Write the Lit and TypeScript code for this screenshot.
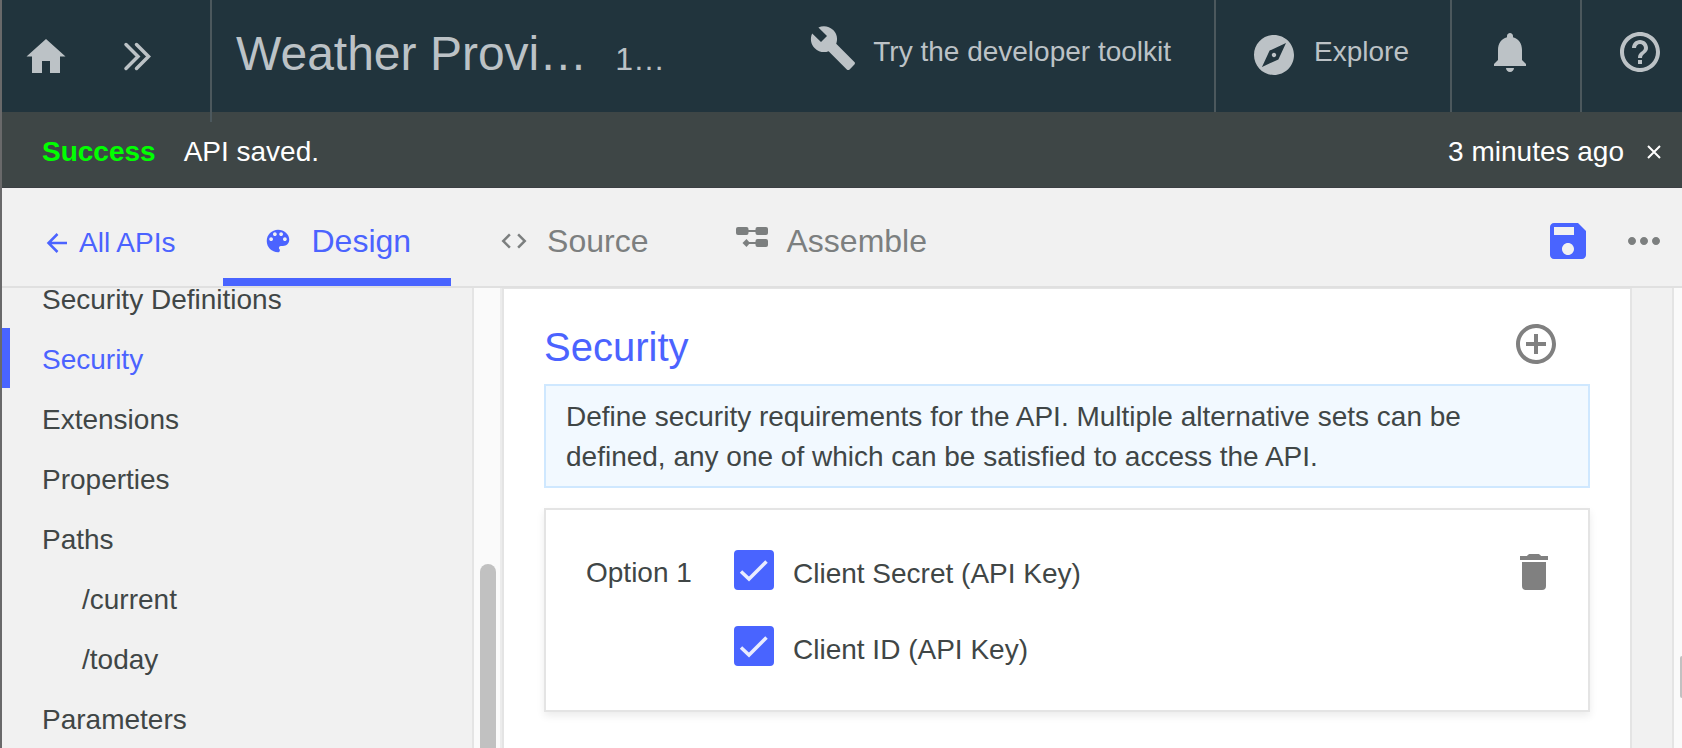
import { LitElement, html, css, svg } from "lit";
import { customElement, state } from "lit/decorators.js";
import { classMap } from "lit/directives/class-map.js";

const paths = {
  home: "M2.500 20.500 22 3l19.500 17.500H36V37H26V25H18V37H8V20.500z",
  build:
    "M22.700 19l-9.100-9.100c.9-2.300.4-5-1.500-6.900-2-2-5-2.400-7.400-1.300L9 6 6 9 1.600 4.700C.4 7.100.9 10.100 2.900 12.100c1.900 1.900 4.600 2.400 6.900 1.500l9.100 9.100c.4.4 1 .4 1.400 0l2.300-2.300c.5-.4.5-1.100.1-1.400z",
  explore:
    "M12 10.900c-.61 0-1.100.49-1.100 1.100s.49 1.100 1.100 1.100c.61 0 1.100-.49 1.100-1.100s-.49-1.100-1.100-1.100zM12 2C6.480 2 2 6.480 2 12s4.480 10 10 10 10-4.480 10-10S17.520 2 12 2zm2.190 12.190L6 18l3.810-8.190L18 6l-3.810 8.190z",
  bell: "M12 22c1.100 0 2-.9 2-2h-4c0 1.100.89 2 2 2zm6-6v-5c0-3.070-1.640-5.640-4.500-6.320V4c0-.83-.67-1.500-1.500-1.500s-1.500.67-1.500 1.500v.68C7.630 5.360 6 7.920 6 11v5l-2 2v1h16v-1l-2-2z",
  help: "M11 18h2v-2h-2v2zm1-16C6.480 2 2 6.480 2 12s4.480 10 10 10 10-4.480 10-10S17.520 2 12 2zm0 18c-4.410 0-8-3.590-8-8s3.590-8 8-8 8 3.590 8 8-3.590 8-8 8zm0-14c-2.210 0-4 1.790-4 4h2c0-1.100.9-2 2-2s2 .9 2 2c0 2-3 1.750-3 5h2c0-2.250 3-2.500 3-5 0-2.210-1.790-4-4-4z",
  palette:
    "M12 3c-4.970 0-9 4.030-9 9s4.030 9 9 9c.83 0 1.500-.67 1.500-1.500 0-.39-.15-.74-.39-1.010-.23-.26-.38-.61-.38-.99 0-.83.67-1.500 1.500-1.500H16c2.760 0 5-2.240 5-5 0-4.420-4.030-8-9-8zm-5.500 9c-.83 0-1.500-.67-1.500-1.500S5.670 9 6.500 9 8 9.670 8 10.500 7.330 12 6.500 12zm3-4C8.670 8 8 7.330 8 6.500S8.670 5 9.500 5s1.500.67 1.500 1.500S10.330 8 9.500 8zm5 0c-.83 0-1.500-.67-1.500-1.500S13.670 5 14.500 5s1.500.67 1.500 1.500S15.330 8 14.500 8zm3 4c-.83 0-1.500-.67-1.500-1.500S16.670 9 17.500 9s1.500.67 1.500 1.500-.67 1.500-1.500 1.500z",
  code: "M9.400 16.600L4.800 12l4.600-4.600L8 6l-6 6 6 6 1.400-1.400zm5.200 0l4.600-4.600-4.600-4.600L16 6l6 6-6 6-1.400-1.400z",
  save: "M17 3H5c-1.110 0-2 .9-2 2v14c0 1.100.89 2 2 2h14c1.100 0 2-.9 2-2V7l-4-4zM12 19c-1.660 0-3-1.340-3-3s1.340-3 3-3 3 1.340 3 3-1.340 3-3 3zm3-10H5V5h10v4z",
  more: "M6 10c-1.100 0-2 .9-2 2s.9 2 2 2 2-.9 2-2-.9-2-2-2zm12 0c-1.100 0-2 .9-2 2s.9 2 2 2 2-.9 2-2-.9-2-2-2zm-6 0c-1.100 0-2 .9-2 2s.9 2 2 2 2-.9 2-2-.9-2-2-2z",
  add: "M13 7h-2v4H7v2h4v4h2v-4h4v-2h-4V7zm-1-5C6.480 2 2 6.480 2 12s4.480 10 10 10 10-4.480 10-10S17.520 2 12 2zm0 18c-4.410 0-8-3.590-8-8s3.590-8 8-8 8 3.590 8 8-3.590 8-8 8z",
};

const icon = (name: keyof typeof paths, size = 48, box = "0 0 24 24") => html`
  <svg width=${size} height=${size} viewBox=${box} fill="currentColor" aria-hidden="true">
    ${svg`<path d=${paths[name]} />`}
  </svg>
`;

@customElement("app-root")
export class AppRoot extends LitElement {
  static styles = css`
    :host {
      display: flex;
      flex-direction: column;
      box-sizing: border-box;
      height: 100vh;
      overflow: hidden;
      border-left: 2px solid #69696a;
      background: #f1f1f1;
      color: #404646;
      font: 28px/40px "Liberation Sans", Arial, sans-serif;
    }
    *, *::before { box-sizing: border-box; }
    svg { display: block; flex: none; }
    a { color: inherit; text-decoration: none; }
    button {
      display: flex;
      align-items: center;
      margin: 0;
      padding: 0;
      border: 0;
      background: none;
      color: inherit;
      font: inherit;
      cursor: pointer;
    }
    h1, h2, p { margin: 0; font-weight: normal; }

    .header {
      position: relative;
      z-index: 1;
      display: flex;
      flex: none;
      height: 112px;
      background: #21343d;
      color: #bcc2c6;
    }
    .shortcuts {
      display: flex;
      align-items: center;
      gap: 54px;
      flex: none;
      height: 122px;
      padding: 0 56px 10px 22px;
      border-right: 2px solid #4c585d;
    }
    .title {
      display: flex;
      align-items: baseline;
      gap: 28px;
      padding-left: 24px;
      white-space: nowrap;
    }
    .title h1 { font-size: 48px; line-height: 108px; }
    .title span { font-size: 32px; }
    .tools { display: flex; margin-left: auto; }
    .tool {
      gap: 16px;
      height: 112px;
      padding: 0 42px 8px 34px;
      border-left: 2px solid #4c585d;
      white-space: nowrap;
    }
    .tool.toolkit { padding-right: 43px; border-left: 0; }
    .tool.toolkit svg { margin-bottom: 8px; }
    .tool.explore { padding-right: 41px; }
    .tool.explore svg { margin-top: 6px; }
    .tool.alerts { padding-right: 46px; }
    .tool.help { padding-right: 18px; }

    .notice {
      display: flex;
      align-items: center;
      flex: none;
      height: 76px;
      padding: 4px 18px 0 40px;
      border-bottom: 1px solid #3b3f43;
      background: #3e4646;
      color: #fff;
    }
    .notice strong { margin-right: 28px; color: #0f0; }
    .notice time { margin-left: auto; }
    .notice button { margin-left: 20px; }

    .toolbar {
      display: flex;
      align-items: stretch;
      flex: none;
      height: 100px;
      padding: 0 14px 0 40px;
      border-bottom: 2px solid #e0e0e0;
    }
    .back {
      display: flex;
      align-items: center;
      gap: 7px;
      margin-right: 48px;
      padding-top: 12px;
      color: #4b63ff;
      white-space: nowrap;
    }
    .tabs { display: flex; gap: 8px; }
    .tab {
      gap: 18px;
      padding: 16px 40px 0;
      border-bottom: 8px solid transparent;
      color: #7c7f7f;
      font-size: 32px;
    }
    .tab.active { border-color: #4964ff; color: #4b63ff; }
    .tab .flow { margin-bottom: 8px; }
    .actions {
      display: flex;
      gap: 28px;
      margin-left: auto;
      padding-top: 8px;
      color: #7c7f7f;
    }
    .actions .save { color: #4964ff; }

    .body { display: flex; flex: 1; min-height: 0; }
    .sidebar { width: 472px; flex: none; overflow: hidden; border-right: 2px solid #e4e4e4; }
    .sidebar nav { margin-top: -20px; }
    .item {
      display: block;
      height: 60px;
      padding-left: 32px;
      border-left: 8px solid transparent;
      line-height: 64px;
    }
    .item.child { padding-left: 72px; }
    .item.active { border-color: #4964ff; color: #4b63ff; }
    .track {
      width: 28px;
      flex: none;
      padding: 276px 4px 0 6px;
      border-right: 2px solid #ececec;
      background: #fafafa;
    }
    .thumb { width: 16px; height: 100%; border-radius: 8px 8px 0 0; background: #c1c1c1; }

    .panel {
      flex: 1;
      min-width: 0;
      padding: 31px 40px 0;
      border: solid #e4e4e4;
      border-width: 1px 2px 0;
      background: #fff;
    }
    .heading { display: flex; justify-content: space-between; padding-right: 30px; }
    .heading h2 { color: #4b63ff; font-size: 40px; line-height: 54px; }
    .heading button { align-self: flex-start; color: #808080; }
    .info {
      margin-top: 10px;
      padding: 11px 20px 9px;
      border: 2px solid #cfe8ff;
      background: #f2f9ff;
    }
    .card {
      display: flex;
      align-items: flex-start;
      margin-top: 20px;
      padding: 40px 30px 40px 40px;
      border: 2px solid #e4e4e4;
      box-shadow: 0 4px 8px rgba(0, 0, 0, 0.08);
    }
    .name { width: 148px; flex: none; line-height: 46px; }
    .schemes { display: flex; flex-direction: column; gap: 32px; flex: 1; }
    .scheme { display: grid; grid-template-columns: 40px 1fr; column-gap: 19px; line-height: 48px; height: 44px; }
    .scheme input {
      grid-area: 1 / 1;
      appearance: none;
      width: 40px;
      height: 40px;
      margin: 0;
      border: 2px solid #4964ff;
      border-radius: 4px;
      background: #fff;
    }
    .scheme input:checked { background: #4964ff; }
    .scheme svg { grid-area: 1 / 1; pointer-events: none; visibility: hidden; }
    .scheme input:checked + svg { visibility: visible; }
    .scheme span { grid-area: 1 / 2; }
    .trash { color: #808080; }

    .outer { display: flex; width: 50px; flex: none; }
    .gutter { width: 42px; flex: none; border-right: 2px solid #e4e4e4; }
    .edge { flex: 1; padding: 368px 0 0 6px; background: #fafafa; }
    .grip { height: 42px; border-radius: 8px 0 0 8px; background: #c1c1c1; }
  `;

  @state() private tab = "Design";
  @state() private section = "Security";

  private sections = [
    { label: "Security Definitions" },
    { label: "Security" },
    { label: "Extensions" },
    { label: "Properties" },
    { label: "Paths" },
    { label: "/current", child: true },
    { label: "/today", child: true },
    { label: "Parameters" },
  ];

  private schemes = ["Client Secret (API Key)", "Client ID (API Key)"];

  private tabs = [
    { label: "Design", icon: icon("palette", 30) },
    { label: "Source", icon: icon("code", 30) },
    {
      label: "Assemble",
      icon: html`<svg class="flow" width="32" height="20" viewBox="0 0 32 20" fill="currentColor" aria-hidden="true">
        <rect width="12.500" height="8" rx="2" />
        <rect x="19.500" width="12.500" height="8" rx="2" />
        <rect x="19.500" y="12" width="12.500" height="8" rx="2" />
        <path d="M12 3h8v2h-8zM12 15h8v2h-8zM6.500 16l4-4 3.500 4-3.500 4z" />
      </svg>`,
    },
  ];

  render() {
    return html`
      <header class="header">
        <div class="shortcuts">
          <button aria-label="Home">${icon("home", 44, "0 0 44 40")}</button>
          <button aria-label="Expand navigation">
            <svg width="32" height="30" viewBox="0 0 32 30" fill="none" stroke="currentColor" stroke-width="3.500" stroke-linecap="round" aria-hidden="true">
              <path d="M4 3.500l12 12-12 12M14.500 3.500l12 12-12 12" />
            </svg>
          </button>
        </div>
        <div class="title">
          <h1>Weather Provi…</h1>
          <span>1…</span>
        </div>
        <div class="tools">
          <button class="tool toolkit">${icon("build")}Try the developer toolkit</button>
          <button class="tool explore">${icon("explore")}Explore</button>
          <button class="tool alerts" aria-label="Notifications">${icon("bell")}</button>
          <button class="tool help" aria-label="Help">${icon("help")}</button>
        </div>
      </header>

      <div class="notice" role="status">
        <strong>Success</strong>
        <span>API saved.</span>
        <time>3 minutes ago</time>
        <button aria-label="Dismiss">
          <svg width="20" height="20" viewBox="0 0 20 20" fill="none" stroke="currentColor" stroke-width="2" aria-hidden="true">
            <path d="M4 4l12 12M16 4L4 16" />
          </svg>
        </button>
      </div>

      <div class="toolbar">
        <a class="back" href="#apis">
          <svg width="30" height="24" viewBox="0 0 30 24" fill="none" stroke="currentColor" stroke-width="2.500" aria-hidden="true">
            <path d="M25 12H7M15.500 3l-9 9 9 9" />
          </svg>
          All APIs
        </a>
        <div class="tabs" role="tablist">
          ${this.tabs.map(
            (t) => html`<button
              role="tab"
              aria-selected=${t.label === this.tab}
              class=${classMap({ tab: true, active: t.label === this.tab })}
              @click=${() => (this.tab = t.label)}
            >${t.icon}${t.label}</button>`
          )}
        </div>
        <div class="actions">
          <button class="save" aria-label="Save">${icon("save")}</button>
          <button aria-label="More actions">${icon("more")}</button>
        </div>
      </div>

      <div class="body">
        <aside class="sidebar">
          <nav>
            ${this.sections.map(
              (s) => html`<a
                href="#"
                class=${classMap({ item: true, child: !!s.child, active: s.label === this.section })}
                @click=${(e: Event) => {
                  e.preventDefault();
                  this.section = s.label;
                }}
              >${s.label}</a>`
            )}
          </nav>
        </aside>
        <div class="track"><div class="thumb"></div></div>
        <main class="panel">
          <div class="heading">
            <h2>Security</h2>
            <button aria-label="Add option">${icon("add")}</button>
          </div>
          <p class="info">
            Define security requirements for the API. Multiple alternative sets can be defined, any one of which can
            be satisfied to access the API.
          </p>
          <section class="card">
            <div class="name">Option 1</div>
            <div class="schemes">
              ${this.schemes.map(
                (s) => html`<label class="scheme">
                  <input type="checkbox" checked />
                  <svg width="40" height="40" viewBox="0 0 40 40" fill="none" stroke="#e9ecff" stroke-width="3.500" aria-hidden="true">
                    <path d="M7 21.500l8 7.500L32.500 11.500" />
                  </svg>
                  <span>${s}</span>
                </label>`
              )}
            </div>
            <button class="trash" aria-label="Delete option">
              <svg width="48" height="46" viewBox="0 0 48 46" fill="currentColor" aria-hidden="true">
                <path d="M10 6h7c1-1.500 2-2 3-2h8c1 0 2 .5 3 2h7v4H10zM12 12h24v24q0 4-4 4H16q-4 0-4-4z" />
              </svg>
            </button>
          </section>
        </main>
        <div class="outer">
          <div class="gutter"></div>
          <div class="edge"><div class="grip"></div></div>
        </div>
      </div>
    `;
  }
}
